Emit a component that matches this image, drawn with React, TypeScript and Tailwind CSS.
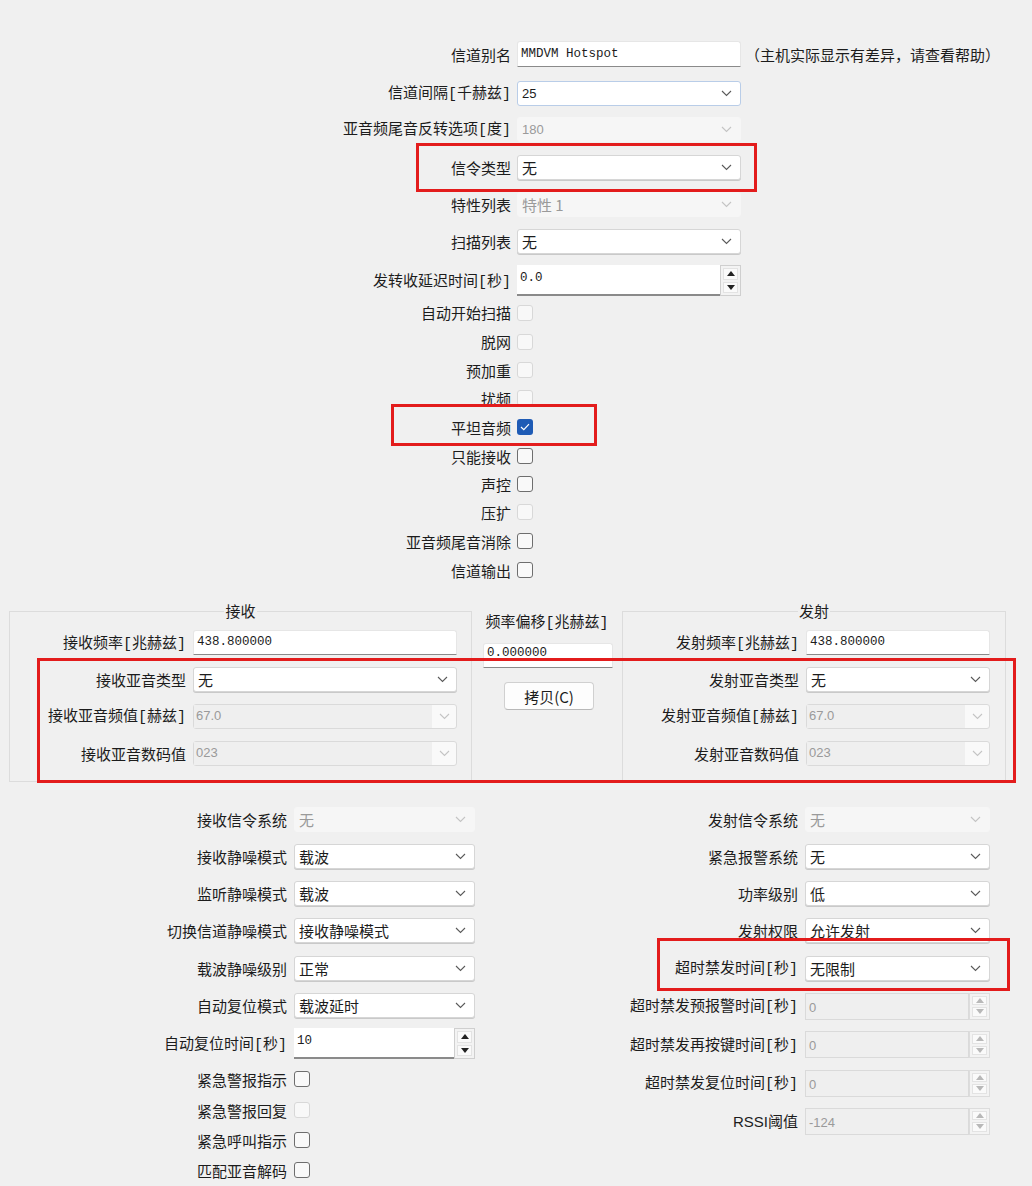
import React from "react";

const CJK = "font-['Microsoft_YaHei','Noto_Sans_CJK_SC',sans-serif]";
const MONO = "font-['Liberation_Mono','Noto_Sans_CJK_SC',monospace]";
const UI = "font-['Liberation_Sans','Noto_Sans_CJK_SC',sans-serif]";

function Chevron({ light }: { light?: boolean }) {
  return (
    <svg width="11" height="7" viewBox="0 0 11 7" className="shrink-0">
      <path d="M1 1 L5.5 5.5 L10 1" fill="none" stroke={light ? "#c4c4c4" : "#5a5a5a"} strokeWidth="1.1" />
    </svg>
  );
}

function BText({ text }: { text: string }) {
  const parts = text.split(/([\[\]])/);
  return (
    <>
      {parts.map((p, i) =>
        p === "[" || p === "]" ? (
          <span key={i} className="font-['Liberation_Mono',monospace]">{p}</span>
        ) : (
          <React.Fragment key={i}>{p}</React.Fragment>
        )
      )}
    </>
  );
}

function Label({ children }: { children: React.ReactNode }) {
  return (
    <div className={`${CJK} text-[15px] leading-none text-[#1c1c1c] text-right whitespace-nowrap`}>
      {typeof children === "string" ? <BText text={children} /> : children}
    </div>
  );
}

function Combo({ value, disabled, kind = "cjk", editable, focus }: { value: string; disabled?: boolean; kind?: "cjk" | "ui"; editable?: boolean; focus?: boolean }) {
  const font = kind === "cjk" ? `${CJK} text-[15px]` : `${UI} text-[13px]`;
  if (disabled && editable) {
    return (
      <div className="h-[25px] w-full flex items-stretch border border-[#dadada] rounded-[3px] bg-[#f9f9f9]">
        <div className={`flex-1 flex items-center pl-[2px] bg-[#efefef] ${font} text-[#9a9a9a]`}>{value}</div>
        <div className="w-[24px] flex items-center justify-center"><Chevron light /></div>
      </div>
    );
  }
  return (
    <div
      className={`h-[25px] w-full flex items-center justify-between pl-[4px] pr-[8px] rounded-[3px] border ${
        disabled ? "bg-[#f6f6f6] border-[#f6f6f6] text-[#9a9a9a]" : focus ? "bg-white border-[#b9cde8] text-[#1c1c1c]" : "bg-white border-[#d6d6d6] text-[#1c1c1c] shadow-[0_1px_0_#c9c9c9]"
      } ${font}`}
    >
      <span className="leading-none">{value}</span>
      <Chevron light={disabled} />
    </div>
  );
}

function LineEdit({ value, h = 26, topText }: { value: string; h?: number; topText?: boolean }) {
  return (
    <div
      style={{ height: h }}
      className={`w-full bg-white border border-[#e6e6e6] border-b-[#8a8a8a] rounded-t-[3px] flex ${topText ? "items-start pt-[3px]" : "items-center"} pl-[3px] ${MONO} text-[12.5px] leading-none text-[#1c1c1c]`}
    >
      {value}
    </div>
  );
}

function SpinArrows({ disabled }: { disabled?: boolean }) {
  const c = disabled ? "#b8b8b8" : "#222";
  return (
    <div className={`w-[21px] flex flex-col gap-[2px] p-[2px] border ${disabled ? "border-[#dcdcdc]" : "border-[#cfcfcf]"} bg-[#f3f3f3]`}>
      <div className="flex-1 flex items-center justify-center bg-[#fafafa] border border-[#e3e3e3]">
        <svg width="8" height="5" viewBox="0 0 8 5"><path d="M0 5 L4 0 L8 5 Z" fill={c} /></svg>
      </div>
      <div className="flex-1 flex items-center justify-center bg-[#fafafa] border border-[#e3e3e3]">
        <svg width="8" height="5" viewBox="0 0 8 5"><path d="M0 0 L4 5 L8 0 Z" fill={c} /></svg>
      </div>
    </div>
  );
}

function Spin({ value, disabled, h = 31 }: { value: string; disabled?: boolean; h?: number }) {
  return (
    <div style={{ height: h }} className="w-full flex items-stretch">
      <div
        className={`flex-1 flex items-start pt-[4px] pl-[3px] ${
          disabled ? `bg-[#efefef] border border-[#dadada] text-[#9a9a9a] ${UI} text-[13px]` : `bg-white border-b-2 border-b-[#8a8a8a] text-[#1c1c1c] ${MONO} text-[12.5px]`
        }`}
      >
        {value}
      </div>
      <SpinArrows disabled={disabled} />
    </div>
  );
}

function Check({ checked, disabled }: { checked?: boolean; disabled?: boolean }) {
  if (checked) {
    return (
      <div className="w-[16px] h-[16px] rounded-[3px] bg-[#1e5bb5] flex items-center justify-center">
        <svg width="10" height="8" viewBox="0 0 10 8"><path d="M1 4 L3.8 6.6 L9 1.2" fill="none" stroke="#fff" strokeWidth="1.2" /></svg>
      </div>
    );
  }
  return (
    <div
      className={`w-[16px] h-[16px] rounded-[3px] border ${disabled ? "border-[#d8d8d8] bg-[#f8f8f8]" : "border-[#6e6e6e] bg-[#f9f9f9]"}`}
    />
  );
}

function Row({ h, cols, label, children }: { h: number; cols: string; label: React.ReactNode; children: React.ReactNode }) {
  return (
    <div style={{ height: h }} className={`grid items-center ${cols}`}>
      <Label>{label}</Label>
      <div className="flex items-center">{children}</div>
    </div>
  );
}

const TOP = "grid-cols-[511px_224px] gap-x-[6px]";
const GL = "grid-cols-[176px_264px] gap-x-[7px]";
const GR = "grid-cols-[176px_184px] gap-x-[7px]";
const BL = "grid-cols-[287px_181px] gap-x-[7px]";
const BR = "grid-cols-[318px_185px] gap-x-[7px]";

function RedBox({ cls }: { cls: string }) {
  return <div className={`absolute border-[3px] border-[#e31c1c] pointer-events-none ${cls}`} />;
}

function GroupBox({ title, children, cls }: { title: string; children: React.ReactNode; cls: string }) {
  return (
    <div className={`relative border border-[#dcdcdc] ${cls}`}>
      <div className="absolute -top-[11px] left-0 right-0 flex justify-center">
        <span className={`${CJK} text-[15px] leading-[20px] bg-[#f0f0f0] text-[#1c1c1c] px-[1px]`}>{title}</span>
      </div>
      {children}
    </div>
  );
}

export default function App() {
  const checks: [string, boolean, boolean, number][] = [
    ["自动开始扫描", false, true, 29],
    ["脱网", false, true, 29],
    ["预加重", false, true, 28],
    ["扰频", false, true, 28],
    ["平坦音频", true, false, 30],
    ["只能接收", false, false, 28],
    ["声控", false, false, 28],
    ["压扩", false, true, 28],
    ["亚音频尾音消除", false, false, 30],
    ["信道输出", false, false, 28],
  ];
  return (
    <div className="relative w-[1032px] h-[1186px] bg-[#f0f0f0] overflow-hidden">
      {/* Top section */}
      <div className="pt-[35px] flex flex-col">
        <div style={{ height: 38 }} className="flex items-center">
          <div className={`grid items-center ${TOP}`}>
            <Label>信道别名</Label>
            <LineEdit value="MMDVM Hotspot" />
          </div>
          <div className={`${CJK} text-[15px] leading-none ml-[4px] text-[#1c1c1c] whitespace-nowrap`}>（主机实际显示有差异，请查看帮助）</div>
        </div>
        <Row h={40} cols={TOP} label="信道间隔[千赫兹]"><Combo value="25" kind="ui" focus /></Row>
        <Row h={32} cols={TOP} label="亚音频尾音反转选项[度]"><Combo value="180" kind="ui" disabled /></Row>
        <Row h={44} cols={TOP} label="信令类型"><Combo value="无" /></Row>
        <Row h={30} cols={TOP} label="特性列表"><Combo value="特性 1" disabled /></Row>
        <Row h={44} cols={TOP} label="扫描列表"><Combo value="无" /></Row>
        <Row h={35} cols={TOP} label="发转收延迟时间[秒]"><Spin value="0.0" /></Row>
        {checks.map(([l, c, d, h]) => (
          <Row key={l} h={h} cols={TOP} label={l}><Check checked={c} disabled={d} /></Row>
        ))}
      </div>

      {/* Middle section */}
      <div className="flex mt-[27px] ml-[9px] h-[171px]">
        <GroupBox title="接收" cls="w-[463px] h-full pt-[17px]">
          <div className="flex flex-col">
            <Row h={27} cols={GL} label="接收频率[兆赫兹]"><LineEdit value="438.800000" h={25} /></Row>
            <div className="h-[10px]" />
            <Row h={26} cols={GL} label="接收亚音类型"><Combo value="无" /></Row>
            <div className="h-[11px]" />
            <Row h={26} cols={GL} label="接收亚音频值[赫兹]"><Combo value="67.0" kind="ui" disabled editable /></Row>
            <div className="h-[11px]" />
            <Row h={26} cols={GL} label="接收亚音数码值"><Combo value="023" kind="ui" disabled editable /></Row>
          </div>
        </GroupBox>
        <div className="w-[150px] flex flex-col items-center pt-[1px]">
          <div className={`${CJK} text-[15px] leading-[18px] text-[#1c1c1c]`}><BText text="频率偏移[兆赫兹]" /></div>
          <div className="w-[130px] mt-[10px] ml-[2px]"><LineEdit value="0.000000" h={25} topText /></div>
          <button className={`mt-[14px] ml-[4px] w-[90px] h-[28px] rounded-[4px] bg-[#fdfdfd] border border-[#d0d0d0] border-b-[#b8b8b8] ${CJK} text-[15px] text-[#1c1c1c] leading-none`}>拷贝(C)</button>
        </div>
        <GroupBox title="发射" cls="w-[384px] h-full pt-[17px]">
          <div className="flex flex-col">
            <Row h={27} cols={GR} label="发射频率[兆赫兹]"><LineEdit value="438.800000" h={25} /></Row>
            <div className="h-[10px]" />
            <Row h={26} cols={GR} label="发射亚音类型"><Combo value="无" /></Row>
            <div className="h-[11px]" />
            <Row h={26} cols={GR} label="发射亚音频值[赫兹]"><Combo value="67.0" kind="ui" disabled editable /></Row>
            <div className="h-[11px]" />
            <Row h={26} cols={GR} label="发射亚音数码值"><Combo value="023" kind="ui" disabled editable /></Row>
          </div>
        </GroupBox>
      </div>

      {/* Bottom section */}
      <div className="flex mt-[19px]">
        <div className="w-[480px] flex flex-col">
          <Row h={37} cols={BL} label="接收信令系统"><Combo value="无" disabled /></Row>
          <Row h={37} cols={BL} label="接收静噪模式"><Combo value="载波" /></Row>
          <Row h={37} cols={BL} label="监听静噪模式"><Combo value="载波" /></Row>
          <Row h={37} cols={BL} label="切换信道静噪模式"><Combo value="接收静噪模式" /></Row>
          <Row h={38} cols={BL} label="载波静噪级别"><Combo value="正常" /></Row>
          <Row h={37} cols={BL} label="自动复位模式"><Combo value="载波延时" /></Row>
          <Row h={39} cols={BL} label="自动复位时间[秒]"><Spin value="10" /></Row>
          <Row h={32} cols={BL} label="紧急警报指示"><Check /></Row>
          <Row h={30} cols={BL} label="紧急警报回复"><Check disabled /></Row>
          <Row h={30} cols={BL} label="紧急呼叫指示"><Check /></Row>
          <Row h={30} cols={BL} label="匹配亚音解码"><Check /></Row>
        </div>
        <div className="flex flex-col">
          <Row h={37} cols={BR} label="发射信令系统"><Combo value="无" disabled /></Row>
          <Row h={37} cols={BR} label="紧急报警系统"><Combo value="无" /></Row>
          <Row h={37} cols={BR} label="功率级别"><Combo value="低" /></Row>
          <Row h={37} cols={BR} label="发射权限"><Combo value="允许发射" /></Row>
          <Row h={38} cols={BR} label="超时禁发时间[秒]"><Combo value="无限制" /></Row>
          <Row h={38} cols={BR} label="超时禁发预报警时间[秒]"><Spin value="0" disabled h={27} /></Row>
          <Row h={39} cols={BR} label="超时禁发再按键时间[秒]"><Spin value="0" disabled h={27} /></Row>
          <Row h={38} cols={BR} label="超时禁发复位时间[秒]"><Spin value="0" disabled h={27} /></Row>
          <Row h={38} cols={BR} label={<span><span className={UI}>RSSI</span>阈值</span>}><Spin value="-124" disabled h={27} /></Row>
        </div>
      </div>

      <RedBox cls="left-[416px] top-[143px] w-[341px] h-[49px]" />
      <RedBox cls="left-[391px] top-[404px] w-[206px] h-[42px]" />
      <RedBox cls="left-[37px] top-[658px] w-[979px] h-[125px]" />
      <RedBox cls="left-[657px] top-[938px] w-[353px] h-[53px]" />
    </div>
  );
}
